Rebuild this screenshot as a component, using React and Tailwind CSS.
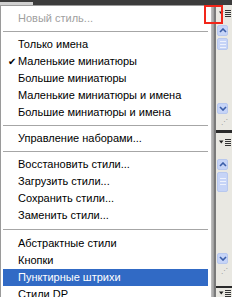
import React from 'react';

function Item({ label, checked, disabled, active }) {
  let tone = 'text-black';
  if (disabled) tone = 'text-[#a0a0a0]';
  if (active) tone = 'text-white bg-[#316ac5]';
  return (
    <div className={`relative ml-[2px] mr-[3px] h-[17px] pl-[15px] leading-[17px] whitespace-nowrap ${tone}`}>
      {checked ? <span className="absolute left-[5px] top-0 text-[10px]">✔</span> : null}
      {label}
    </div>
  );
}

function Sep({ tall }) {
  return (
    <div className={`flex items-center pl-[2px] pr-[3px] ${tall ? 'h-[11px]' : 'h-[9px]'}`}>
      <div className="h-px w-full bg-[#a6a6a6]" />
    </div>
  );
}

function MenuIcon() {
  return (
    <svg width="12" height="7" viewBox="0 0 12 7" className="block">
      <path d="M0 1.5h4.5L2.25 4.5z" fill="#222" />
      <path d="M6 0.5h6M6 2.5h6M6 4.5h6M6 6.5h6" stroke="#333" strokeWidth="1" />
    </svg>
  );
}

function ArrowBtn({ down }) {
  return (
    <div className="flex h-[11px] w-[11px] items-center justify-center rounded-[2px] border border-[#b8c8ee] bg-[#c6d4f7]">
      <svg width="8" height="5" viewBox="0 0 8 5">
        <path d={down ? 'M1 1l3 3 3-3' : 'M1 4l3-3 3 3'} fill="none" stroke="#3b5ea8" strokeWidth="1.6" />
      </svg>
    </div>
  );
}

function Thumb({ className }) {
  return (
    <div className={`flex w-[11px] flex-col items-center justify-center gap-[2px] rounded-[2px] border border-[#b8c8ee] bg-[#c6d4f7] ${className}`}>
      <div className="h-px w-[6px] bg-[#eef2fc]" />
      <div className="h-px w-[6px] bg-[#eef2fc]" />
      <div className="h-px w-[6px] bg-[#eef2fc]" />
    </div>
  );
}

// scroll strip of a docked panel, seen behind the menu
function Panel({ first }) {
  return (
    <div className={`flex flex-col items-start pl-[1px] ${first ? 'pt-[5px]' : 'pt-[13px]'}`}>
      <ArrowBtn />
      <Thumb className={first ? 'mt-[2px] h-[12px]' : 'mt-[2px] h-[20px]'} />
      <div className={first ? 'h-[53px]' : 'h-[61px]'} />
      <ArrowBtn down />
      <div className="flex h-[14px] w-[11px] items-center justify-end text-[7px] leading-none text-[#999]">⋰</div>
    </div>
  );
}

export default function App() {
  return (
    <div className="relative h-[297px] w-[232px] overflow-hidden bg-[#3c3c3c] font-['Liberation_Sans',Tahoma,sans-serif] text-[11px]">
      <div className="flex h-[5px]">
        <div className="mt-[2px] h-[3px] w-[33px] bg-[#d0d0d0]" />
      </div>
      <div className="flex h-[292px]">
        <div className="w-[211px] border-l border-t border-[#9a9a9a] bg-white pt-[4px]">
          <Item label="Новый стиль..." disabled />
          <Sep />
          <Item label="Только имена" />
          <Item label="Маленькие миниатюры" checked />
          <Item label="Большие миниатюры" />
          <Item label="Маленькие миниатюры и имена" />
          <Item label="Большие миниатюры и имена" />
          <Sep />
          <Item label="Управление наборами..." />
          <Sep />
          <Item label="Восстановить стили..." />
          <Item label="Загрузить стили..." />
          <Item label="Сохранить стили..." />
          <Item label="Заменить стили..." />
          <Sep tall />
          <Item label="Абстрактные стили" />
          <Item label="Кнопки" />
          <Item label="Пунктирные штрихи" active />
          <Item label="Стили DP" />
        </div>
        <div className="w-[3px] bg-gradient-to-r from-[#c4c4c4] to-[#9a9a9a]" />
        <div className="w-[2px] bg-[#7a7a7a]" />
        <div className="flex flex-1 flex-col bg-[#e9e8e2]">
          <div className="flex h-[17px] justify-end pr-[1px] pt-[5px]">
            <MenuIcon />
          </div>
          <Panel first />
          <div className="mt-[2px] h-[3px] bg-[#2a2a2a]" />
          <div className="flex h-[14px] justify-end pr-[1px] pt-[6px]">
            <MenuIcon />
          </div>
          <Panel />
          <div className="mt-[8px] h-[3px] bg-[#2a2a2a]" />
          <div className="flex h-[10px] justify-end pr-[1px] pt-[2px]">
            <MenuIcon />
          </div>
        </div>
      </div>
      <div className="absolute left-[204px] top-[5px] h-[19px] w-[19px] border-2 border-[#f2261a]" />
    </div>
  );
}
